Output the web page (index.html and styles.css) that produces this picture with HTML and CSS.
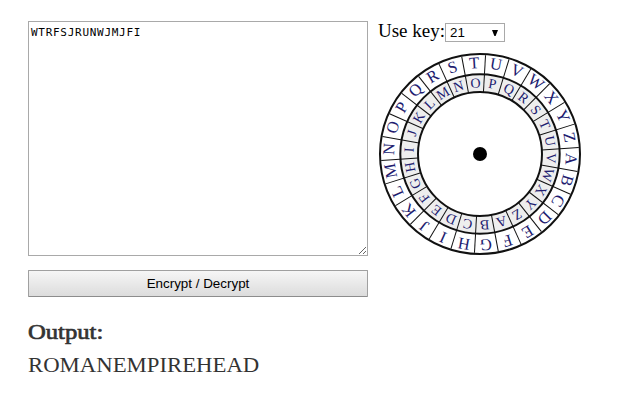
FILE: index.html
```html
<!DOCTYPE html>
<html lang="en">
<head>
<meta charset="utf-8">
<title>Cipher wheel</title>
<link rel="stylesheet" href="styles.css">
</head>
<body>
<main class="cipher">
  <section class="message">
    <textarea class="message-text" spellcheck="false">WTRFSJRUNWJMJFI</textarea>
    <button class="run" type="button">Encrypt / Decrypt</button>
    <h2 class="output-title">Output:</h2>
    <p class="output">ROMANEMPIREHEAD</p>
  </section>
  <section class="key">
    <div class="key-row">
      <span class="key-label">Use key:</span>
      <div class="key-select" role="combobox" tabindex="0"><span>21</span><svg class="arrow" viewBox="0 0 6 6"><path d="M0 0H6L3.6 6H2.4Z"/></svg></div>
    </div>
    <svg class="wheel" viewBox="-102 -102 204 204">
      <circle class="face" r="100"/>
      <circle class="band" r="79.7"/>
      <circle class="face" r="62"/>
      <g id="marks"></g>
      <circle r="7"/>
    </svg>
  </section>
</main>
<script src="wheel.js"></script>
</body>
</html>
```
FILE: styles.css
```css
* { box-sizing: border-box; }
body { margin: 0; background: #fff; color: #000; font-family: "Liberation Serif", serif; overflow: hidden; }
.cipher { display: flex; gap: 10px; padding: 21px 0 0 28px; }
.message { width: 340px; }
.message-text {
  display: block; width: 340px; height: 235px; margin: 0 0 14px; padding: 3px 2px;
  border: 1px solid #a9a9a9; border-radius: 0; outline: none; resize: both;
  font: 11px/15px "DejaVu Sans Mono", monospace; letter-spacing: 0.72px; color: #000;
}
.run {
  display: block; width: 340px; height: 27px; padding: 0;
  border: 1px solid #a0a0a0; border-bottom-color: #8c8c8c; border-radius: 1px;
  background: linear-gradient(#f6f6f6, #dcdcdc);
  font: 13.4px "Liberation Sans", sans-serif; color: #000;
}
.output-title {
  width: max-content; margin: 21px 0 0; font-size: 22px; line-height: 28px; font-weight: normal;
  color: #333; -webkit-text-stroke: 0.7px #333; transform: scaleX(1.12); transform-origin: left;
}
.output {
  width: max-content; margin: 5px 0 0; font-size: 21px; line-height: 28px;
  color: #333; transform: scaleX(1.083); transform-origin: left;
}
.key { width: 204px; }
.key-row { display: flex; align-items: flex-start; height: 31px; padding-top: 2px; }
.key-label { width: 67px; font-size: 19px; line-height: 16px; white-space: nowrap; }
.key-select {
  display: flex; align-items: center; justify-content: space-between;
  width: 60px; height: 19px; padding: 0 6px 0 4px; border: 1px solid #a9a9a9;
  font: 13.33px "Liberation Sans", sans-serif;
}
.arrow { width: 6px; height: 6px; }
.wheel { display: block; width: 204px; height: 204px; }
.face { fill: #fff; stroke: #111; stroke-width: 2; }
.band { fill: #eee; stroke: #111; stroke-width: 2; }
.tick { stroke: #111; stroke-width: 1; }
.letter { fill: #221c70; text-anchor: middle; font-size: 16.5px; }
.inner { font-size: 14px; }
```
FILE: wheel.js
```js
const step = 360 / 26;
const start = 93.2;
const marks = document.getElementById("marks");
const add = (name, attrs, text) => {
  const el = document.createElementNS("http://www.w3.org/2000/svg", name);
  for (const key in attrs) el.setAttribute(key, attrs[key]);
  if (text) el.textContent = text;
  marks.appendChild(el);
};
for (let i = 0; i < 26; i++) {
  const turn = start + i * step;
  add("line", { class: "tick", y1: -99, y2: -62, transform: `rotate(${turn + step / 2})` });
  add("text", { class: "letter", y: -85.7, transform: `rotate(${turn})` }, String.fromCharCode(65 + i));
  add("text", { class: "letter inner", y: -66.5, transform: `rotate(${turn})` }, String.fromCharCode(65 + (i + 21) % 26));
}
```
